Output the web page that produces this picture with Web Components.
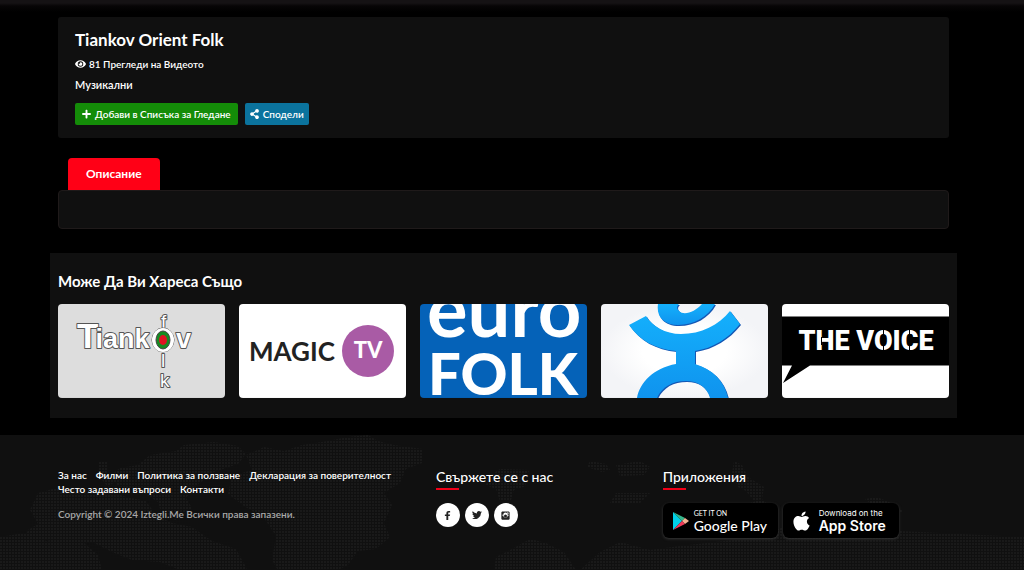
<!DOCTYPE html>
<html lang="bg">
<head>
<meta charset="utf-8">
<meta name="viewport" content="width=device-width, initial-scale=1">
<title>Tiankov Orient Folk</title>
<style>
  body { margin: 0; background: #000; color: #fff; font-family: Lato, "Noto Sans", sans-serif; }
</style>
</head>
<body>
<media-page></media-page>

<template id="t-page">
  <style>
    :host { display: flex; flex-direction: column; min-height: 100vh; }
    .top { height: 12px; background: linear-gradient(#151214, #151214 25%, #070506 50%, #000); }
    main { flex: 1; padding: 5px 67px 17px 50px; }
    .inset { padding: 0 8px; }
    video-summary { margin-bottom: 20px; }
    info-tabs { margin-bottom: 24px; }
    svg { display: block; width: 100%; height: 100%; }
  </style>
  <div class="top"></div>
  <main>
    <div class="inset">
      <video-summary>
        <span slot="title">Tiankov Orient Folk</span>
        <span slot="views">81 Прегледи на Видеото</span>
        <span slot="genre">Музикални</span>
        <action-button slot="actions" icon="plus">Добави в Списъка за Гледане</action-button>
        <action-button slot="actions" icon="share">Сподели</action-button>
      </video-summary>
      <info-tabs>Описание</info-tabs>
    </div>
    <related-list>
      <span slot="heading">Може Да Ви Хареса Също</span>
      <channel-card label="Tiankov Folk">
        <svg viewBox="0 0 167 94" preserveAspectRatio="xMidYMid slice">
          <rect width="167" height="94" fill="#ddd"/>
          <g fill="#fff" stroke="#555" stroke-width="2" paint-order="stroke" stroke-linejoin="round" font-family="Liberation Sans" font-weight="700">
            <text x="19" y="44" font-size="27"><tspan font-size="35">T</tspan><tspan dx="-3">iank</tspan><tspan x="118">v</tspan></text>
            <g font-weight="400" font-size="19">
              <text x="103" y="24">f</text><text x="103" y="63">l</text><text x="102" y="83">k</text>
            </g>
            <ellipse cx="105" cy="36" rx="11" ry="12" stroke-width="1"/>
          </g>
          <ellipse cx="105" cy="36" rx="7" ry="9" fill="#168b22" stroke="#444"/>
          <ellipse cx="105" cy="36" rx="4" ry="5" fill="#e01322"/>
        </svg>
      </channel-card>
      <channel-card label="Magic TV">
        <svg viewBox="0 0 167 94" preserveAspectRatio="xMidYMid slice" font-family="Lato">
          <rect width="167" height="94" fill="#fff"/>
          <text x="10" y="57" font-size="26" font-weight="700" fill="#222">MAGIC</text>
          <circle cx="129" cy="47" r="26" fill="#a95ba5"/>
          <text x="129" y="54" font-size="22" font-weight="900" fill="#fff" text-anchor="middle">TV</text>
        </svg>
      </channel-card>
      <channel-card label="Euro Folk">
        <svg viewBox="0 0 167 94" preserveAspectRatio="xMidYMid slice">
          <rect width="167" height="94" fill="#0562b8"/>
          <text fill="#fff" font-family="Lato"><tspan x="7" y="33" font-size="76" font-weight="700">euro</tspan><tspan x="8" y="91" font-size="58" font-weight="900">FOLK</tspan></text>
        </svg>
      </channel-card>
      <channel-card label="Канал">
        <svg viewBox="0 0 167 94" preserveAspectRatio="xMidYMid slice">
          <defs>
            <radialGradient id="glow"><stop offset=".5" stop-color="#fff"/><stop offset="1" stop-color="#f3f4f7"/></radialGradient>
            <linearGradient id="blue" x2="0" y2="1"><stop stop-color="#14b0fc"/><stop offset="1" stop-color="#0f93ee"/></linearGradient>
          </defs>
          <rect width="167" height="94" fill="url(#glow)"/>
          <g fill="#1457b4" transform="translate(1 1)">
            <path d="M28 21 45 12C51 22 64 30 80 30c20 0 38-9 49-23l10 13c-12 15-27 24-45 27v13c17 5 29 16 33 34h-18c-3-11-12-17-24-17-14 0-24 6-29 17H36c3-16 17-30 39-34V47C54 45 38 36 28 21z"/>
            <path d="M57 0c-2 13 6 21 20 21 16 0 30-8 37-21H101c-7 8-18 12-23 7-3-3-2-5 0-7z"/>
          </g>
          <g fill="url(#blue)">
            <path d="M28 21 45 12C51 22 64 30 80 30c20 0 38-9 49-23l10 13c-12 15-27 24-45 27v13c17 5 29 16 33 34h-18c-3-11-12-17-24-17-14 0-24 6-29 17H36c3-16 17-30 39-34V47C54 45 38 36 28 21z"/>
            <path d="M57 0c-2 13 6 21 20 21 16 0 30-8 37-21H101c-7 8-18 12-23 7-3-3-2-5 0-7z"/>
          </g>
        </svg>
      </channel-card>
      <channel-card label="The Voice">
        <svg viewBox="0 0 167 94" preserveAspectRatio="xMidYMid slice">
          <rect width="167" height="94" fill="#fff"/>
          <path d="M0 12.500h167v49H28L1 79l9-17.500H0z" fill="#000"/>
          <text x="84" y="46" font-family="Roboto" font-size="27" font-weight="900" fill="#fff" text-anchor="middle">THE VOICE</text>
          <path d="M101 25h1v23h-1zM127 25h1v23h-1zM39 33h1v8h-1z"/>
        </svg>
      </channel-card>
    </related-list>
  </main>
  <site-footer></site-footer>
</template>

<template id="t-summary">
  <style>
    :host { display: flex; flex-direction: column; padding: 12px 17px 13px; background: #101010; border-radius: 3px; }
    h1 { margin: 0 0 5px; font-size: 17px; line-height: 22px; font-weight: 700; }
    p { display: flex; align-items: center; gap: 3px; margin: 0 0 5px; font-size: 10px; line-height: 16px; font-weight: 600; }
    .genre { margin-bottom: 10px; font-size: 11px; }
    .actions { display: flex; gap: 7px; }
    svg { width: 11px; height: 10px; }
  </style>
  <h1><slot name="title"></slot></h1>
  <p><svg viewBox="0 0 576 512" fill="#fff" aria-hidden="true"><path d="M572.500 241.400C518.300 135.600 410.900 64 288 64S57.700 135.600 3.500 241.400a32.400 32.400 0 0 0 0 29.200C57.700 376.400 165.100 448 288 448s230.300-71.600 284.500-177.400a32.400 32.400 0 0 0 0-29.200zM288 400a144 144 0 1 1 144-144 143.900 143.900 0 0 1-144 144zm0-240a95.300 95.300 0 0 0-25.300 3.800 47.900 47.900 0 0 1-66.900 66.900A95.800 95.800 0 1 0 288 160z"/></svg><slot name="views"></slot></p>
  <p class="genre"><slot name="genre"></slot></p>
  <div class="actions"><slot name="actions"></slot></div>
</template>

<template id="t-action">
  <style>
    :host { display: block; --tone: #148c08; --space: 7px; }
    :host([icon="share"]) { --tone: #0b739d; --space: 5px; }
    button { display: flex; align-items: center; gap: 4px; height: 22px; padding: 0 var(--space); border: 0; border-radius: 2px; background: var(--tone); color: #fff; font: 600 10px/16px Lato, "Noto Sans", sans-serif; cursor: pointer; }
    svg { width: 9px; height: 10px; }
    path { display: none; }
    :host([icon="plus"]) .plus, :host([icon="share"]) .share { display: inline; }
  </style>
  <button type="button">
    <svg viewBox="0 0 448 512" fill="#fff" aria-hidden="true">
      <path class="plus" d="M416 208H272V64c0-17.700-14.300-32-32-32h-32c-17.700 0-32 14.300-32 32v144H32c-17.700 0-32 14.300-32 32v32c0 17.700 14.300 32 32 32h144v144c0 17.700 14.300 32 32 32h32c17.700 0 32-14.300 32-32V304h144c17.700 0 32-14.300 32-32v-32c0-17.700-14.300-32-32-32z"/>
      <path class="share" d="M352 320c-22.600 0-43.400 7.800-59.800 20.900l-102.500-64.100a96.600 96.600 0 0 0 0-41.700l102.500-64.100A95.500 95.500 0 0 0 352 192c53 0 96-43 96-96S405 0 352 0s-96 43-96 96c0 7.200.8 14.100 2.300 20.900l-102.500 64.100A95.500 95.500 0 0 0 96 160c-53 0-96 43-96 96s43 96 96 96c22.600 0 43.400-7.800 59.800-20.900l102.500 64.100A96.300 96.300 0 0 0 256 416c0 53 43 96 96 96s96-43 96-96-43-96-96-96z"/>
    </svg>
    <slot></slot>
  </button>
</template>

<template id="t-tabs">
  <style>
    :host { display: block; }
    [role="tablist"] { display: flex; padding: 0 10px; }
    button { height: 32px; padding: 0 18px; border: 0; border-radius: 4px 4px 0 0; background: #ff0016; color: #fff; font: 700 12px/16px Lato, "Noto Sans", sans-serif; cursor: pointer; }
    .panel { height: 37px; border: 1px solid #1f1a1a; border-radius: 4px; background: #101010; }
  </style>
  <div role="tablist"><button type="button" role="tab" aria-selected="true"><slot></slot></button></div>
  <div class="panel" role="tabpanel"></div>
</template>

<template id="t-related">
  <style>
    :host { display: block; padding: 16px 8px 20px; background: #101010; }
    h2 { margin: 0 0 11px; font-size: 15px; line-height: 24px; font-weight: 700; }
    .row { display: grid; grid-template-columns: repeat(5, 1fr); gap: 14px; }
  </style>
  <h2><slot name="heading"></slot></h2>
  <div class="row"><slot></slot></div>
</template>

<template id="t-card">
  <style>
    :host { display: block; min-width: 0; }
    a { display: block; aspect-ratio: 16 / 9; border-radius: 4px; overflow: hidden; }
  </style>
  <a href="#"><slot></slot></a>
</template>

<template id="t-footer">
  <style>
    :host { display: grid; background: #101010; overflow: hidden; }
    .map, footer { grid-area: 1 / 1; }
    .map { width: 100%; height: 135px; }
    footer { z-index: 1; display: grid; grid-template-columns: 5fr 3fr 4fr; padding: 32px 67px 28px 50px; }
    section { padding: 0 8px; min-width: 0; }
    nav { display: flex; flex-wrap: wrap; column-gap: 9px; margin: 1px 0 10px; }
    nav a { color: #fff; font-size: 10px; line-height: 14px; font-weight: 600; text-decoration: none; }
    p { margin: 0; color: #a8a8a8; font-size: 10px; line-height: 16px; font-weight: 600; }
    h2 { margin: 0 0 13px; font-size: 14px; line-height: 19px; font-weight: 500; }
    h2::after { content: ""; display: block; width: 23px; height: 2px; margin-top: 2px; background: #f00018; }
    .row { display: flex; gap: 5px; }
  </style>
  <svg class="map" viewBox="0 0 1024 135" preserveAspectRatio="xMidYMin slice" aria-hidden="true">
    <defs><pattern id="dots" width="3" height="3" patternUnits="userSpaceOnUse"><rect width="2" height="2" fill="#191919"/></pattern></defs>
    <g fill="url(#dots)">
      <path d="M138 30l12-10 26-4 8-6 30-3 24 4 8 8-8 10-24 8-18 14-10 12 6 10-16 12-14-4-4-14-16-10-24-6-8-10 10-8zM98 26h10v14l8 6-8 6-10-12zM38 58l22-6 20 4 24-2 22 8 20 4 10 14 16 8 20 4 20 14 24 8 10 18 4 15h-60l-10-12-20-8-28-2-20-8-20-10-22 4-24-6-8 8-16-2 6-16 10-6-8-14zM0 102l24-4 20 8 40 2 14 12 4 15H0z"/>
      <path d="M246 20l18-8 20 4 18-6 26-4 20-4 20-2 10 6 16 4 28 4v14l-16 6-6 14-16 10 8 12-8 18 6 14-14 12-18 2-10 14-20 10-18 15h-36l6-16-8-14 4-24-12-18-20-12-16-12 4-18 20-6z"/>
      <path d="M500 34l30 1-6 8 2 8-12 4-3 10-11 1-4-12-10-4 2-8zM590 26l16 3 4 6-8 2-15-5zM616 30l24-4 10 6-6 8-24 1zM734 26l8 4 6 12 16 10-2 12-8 2-8-10-8-4-6-14zM744 70l18-6 8 8-6 12-14-4zM865 64l12-2 14 6 12 8-8 4-20-8zM616 58h34l-10 10h-30zM496 122l16-8 18-10 16 4 18 9 12 18h-82zM600 117l20-10 30 8 30-4 80-9 28-12 18-2 24 14 46 2 30 16 20 6v9H580zM840 92l18-6 14 8 28 2 40 2 84 4v33H840z"/>
    </g>
  </svg>
  <footer>
    <section>
      <nav>
        <a href="#">За нас</a><a href="#">Филми</a><a href="#">Политика за ползване</a><a href="#">Декларация за поверителност</a><a href="#">Често задавани въпроси</a><a href="#">Контакти</a>
      </nav>
      <p>Copyright © 2024 Iztegli.Me Всички права запазени.</p>
    </section>
    <section>
      <h2>Свържете се с нас</h2>
      <div class="row">
        <social-link label="Facebook"><svg viewBox="0 0 24 24" width="9" height="9"><path fill="#222" d="M9 24V13H5V9h4V6c0-4 2-6 6-6h4v4h-3c-2 0-2 1-2 2v3h5l-1 4h-4v11z"/></svg></social-link>
        <social-link label="Twitter"><svg viewBox="0 0 24 24" width="10" height="10"><path fill="#222" d="M24 4.600a10 10 0 0 1-2.800.8 5 5 0 0 0 2.100-2.700 10 10 0 0 1-3.100 1.200 4.900 4.900 0 0 0-8.400 4.500A14 14 0 0 1 1.700 3.200a4.900 4.900 0 0 0 1.500 6.500 5 5 0 0 1-2.200-.6 4.900 4.900 0 0 0 4 4.900 5 5 0 0 1-2.300.1 4.900 4.900 0 0 0 4.600 3.400A9.900 9.900 0 0 1 0 19.500 14 14 0 0 0 21.500 7.100 10 10 0 0 0 24 4.600z"/></svg></social-link>
        <social-link label="Instagram"><svg viewBox="0 0 24 24" width="9" height="9"><path fill="#222" fill-rule="evenodd" d="M3 1h18l2 2v18l-2 2H3l-2-2V3zm13 3v4h4V4zM3 10v2h3a6 6 0 0 0 12 0h3v-2h-3a6 6 0 0 0-12 0zm9-1a4 4 0 1 0 0 8 4 4 0 0 0 0-8z"/></svg></social-link>
      </div>
    </section>
    <section>
      <h2>Приложения</h2>
      <div class="row">
        <store-badge class="play">
          <svg slot="logo" viewBox="0 0 16 18" width="16" height="18"><path fill="#00d0e8" d="M0 0v18l9-9z"/><path fill="#35b58a" d="M0 0l9 9 3-3z"/><path fill="#f4b392" d="M12 6l4 3-4 3-3-3z"/><path fill="#ef3a59" d="M0 18l9-9 3 3z"/></svg>
          <span slot="small">GET IT ON</span><span slot="large">Google Play</span>
        </store-badge>
        <store-badge class="apple">
          <svg slot="logo" viewBox="0 0 384 512" width="17" height="22"><path fill="#fff" d="M318.700 268.700c-.2-36.700 16.400-64.400 50-84.800-18.800-26.900-47.200-41.700-84.700-44.600-35.500-2.800-74.300 20.700-88.500 20.700-15 0-49.400-19.700-76.400-19.700C63.300 141.200 4 184.800 4 273.500q0 39.300 14.400 81.200c12.800 36.700 59 126.700 107.200 125.200 25.200-.6 43-17.900 75.800-17.900 31.800 0 48.300 17.900 76.400 17.900 48.600-.7 90.400-82.500 102.600-119.300-65.200-30.700-61.700-90-61.700-91.900zm-56.600-164.200c27.300-32.400 24.800-61.900 24-72.500-24.100 1.400-52 16.400-67.900 34.900-17.500 19.800-27.800 44.300-25.600 71.900 26.100 2 49.900-11.400 69.500-34.300z"/></svg>
          <span slot="small">Download on the</span><span slot="large">App Store</span>
        </store-badge>
      </div>
    </section>
  </footer>
</template>

<template id="t-social">
  <style>
    :host { display: block; }
    a { display: flex; align-items: center; justify-content: center; width: 24px; height: 24px; border-radius: 50%; background: #fff; }
  </style>
  <a href="#"><slot></slot></a>
</template>

<template id="t-badge">
  <style>
    :host { display: block; --gap: 5px; --font: Lato; --weight: 500; --caps: 7px; }
    :host(.apple) { --gap: 9px; --font: Inter; --weight: 600; --caps: 8px; }
    a { display: flex; align-items: center; gap: var(--gap); box-sizing: border-box; min-width: 115px; height: 35px; padding: 0 6px 0 10px; border-radius: 6px; background: #000; box-shadow: 0 1px 3px #383838; color: #fff; text-decoration: none; font-family: var(--font), sans-serif; white-space: nowrap; }
    .words { display: flex; flex-direction: column; min-width: 74px; }
    small { font-size: var(--caps); line-height: 9px; }
    strong { font-size: 14px; line-height: 15px; font-weight: var(--weight); }
  </style>
  <a href="#"><slot name="logo"></slot><span class="words"><small><slot name="small"></slot></small><strong><slot name="large"></slot></strong></span></a>
</template>

<script>
  class TemplateElement extends HTMLElement {
    constructor() {
      super();
      const source = document.getElementById(this.constructor.template);
      this.attachShadow({ mode: "open" }).append(source.content.cloneNode(true));
    }
    connectedCallback() {
      const label = this.getAttribute("label");
      const link = this.shadowRoot.querySelector("a");
      if (label && link) link.setAttribute("aria-label", label);
    }
  }
  const elements = {
    "action-button": "t-action",
    "video-summary": "t-summary",
    "info-tabs": "t-tabs",
    "channel-card": "t-card",
    "related-list": "t-related",
    "social-link": "t-social",
    "store-badge": "t-badge",
    "site-footer": "t-footer",
    "media-page": "t-page"
  };
  for (const [name, template] of Object.entries(elements)) {
    customElements.define(name, class extends TemplateElement { static template = template; });
  }
</script>
</body>
</html>
